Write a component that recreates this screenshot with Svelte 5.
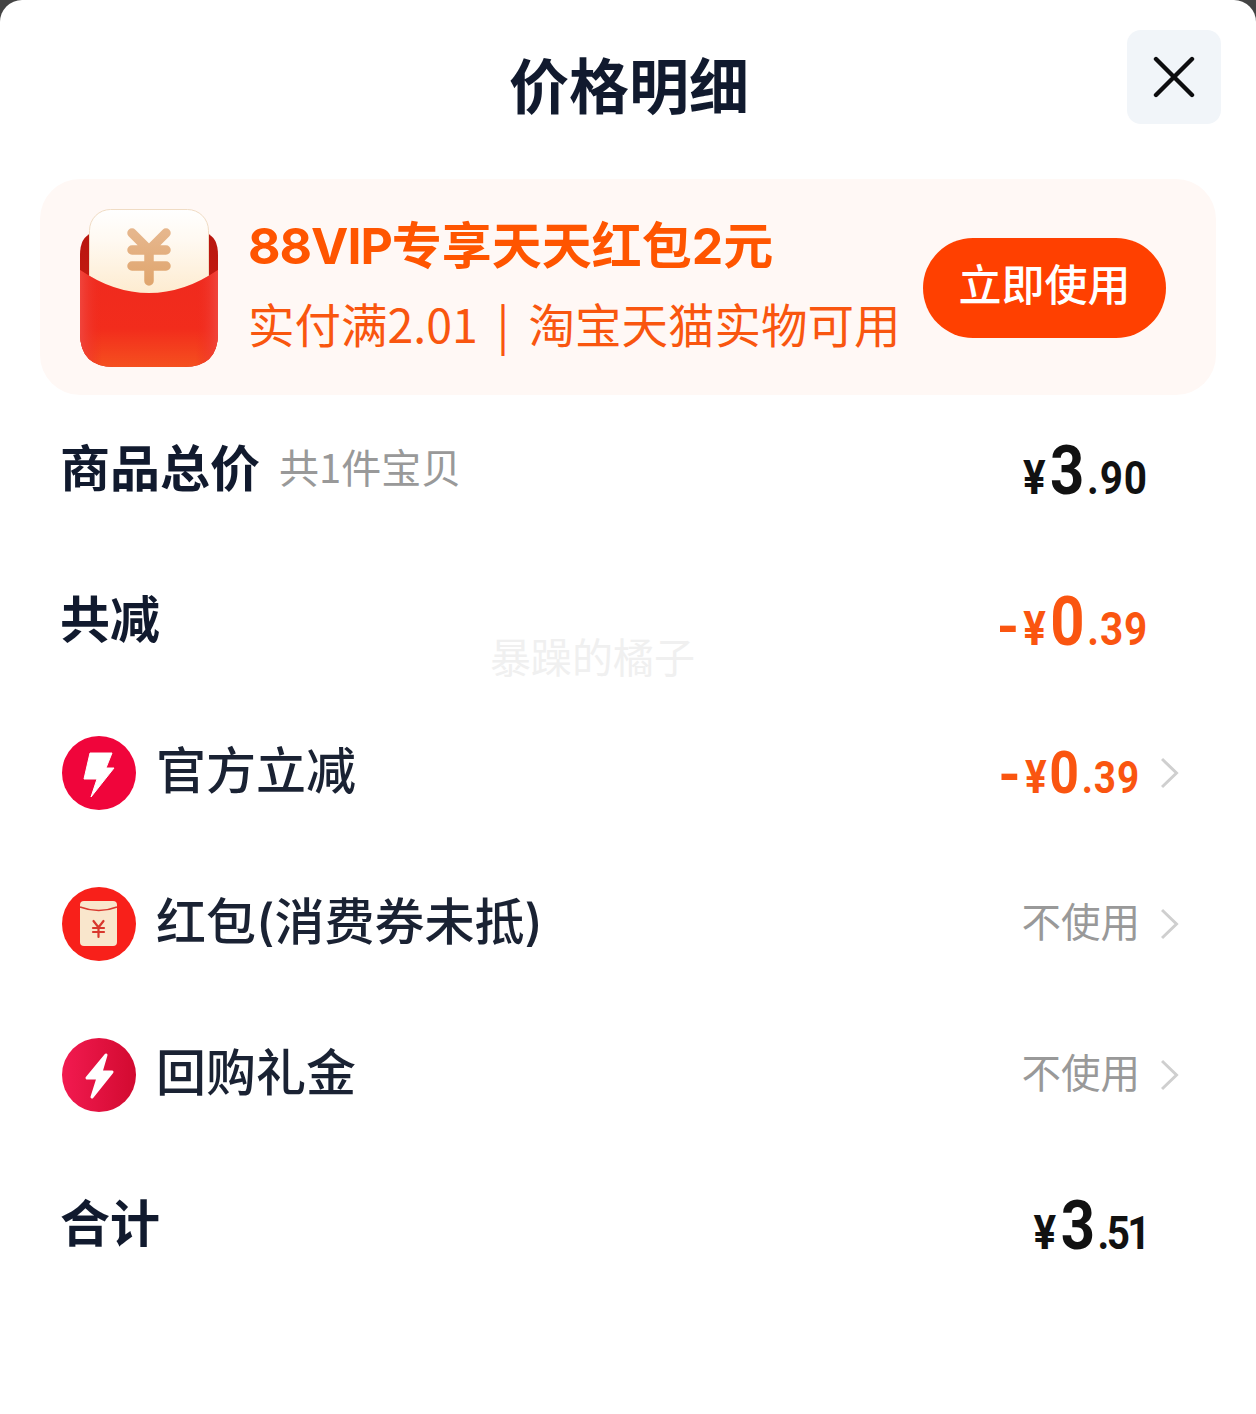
<script lang="ts">
  interface Row {
    icon: "bolt" | "packet" | "bolt2";
    label: string;
    minus?: boolean;
    int?: string;
    dec?: string;
    text?: string;
  }
  const rows: Row[] = [
    { icon: "bolt", label: "官方立减", minus: true, int: "0", dec: ".39" },
    { icon: "packet", label: "红包(消费券未抵)", text: "不使用" },
    { icon: "bolt2", label: "回购礼金", text: "不使用" },
  ];
</script>

<div class="page">
  <div class="sheet">
    <header class="head">
      <h1>价格明细</h1>
      <button type="button" class="close" aria-label="关闭">
        <svg viewBox="0 0 42 42" width="42" height="42">
          <path d="M3 3 L39 39 M39 3 L3 39" stroke="#0d0d0f" stroke-width="4.4" stroke-linecap="round" fill="none" />
        </svg>
      </button>
    </header>

    <section class="banner">
      <svg class="packet-big" viewBox="0 0 138 158" width="138" height="158">
        <defs>
          <linearGradient id="bodyG" x1="0" y1="0" x2="0" y2="1">
            <stop offset="0" stop-color="#ef2a1e" />
            <stop offset="0.6" stop-color="#f22c1c" />
            <stop offset="1" stop-color="#f5501f" />
          </linearGradient>
          <linearGradient id="edgeG" x1="0" y1="0" x2="1" y2="0">
            <stop offset="0" stop-color="#f0443c" />
            <stop offset="0.16" stop-color="#ef2a1e" stop-opacity="0" />
            <stop offset="0.84" stop-color="#ef2a1e" stop-opacity="0" />
            <stop offset="1" stop-color="#f0443c" />
          </linearGradient>
          <linearGradient id="backG" x1="0" y1="0" x2="0" y2="1">
            <stop offset="0" stop-color="#b8160e" />
            <stop offset="1" stop-color="#d42016" />
          </linearGradient>
          <linearGradient id="cardG" x1="0" y1="0" x2="0" y2="1">
            <stop offset="0" stop-color="#ffffff" />
            <stop offset="0.35" stop-color="#fff9f1" />
            <stop offset="1" stop-color="#fdeacc" />
          </linearGradient>
          <linearGradient id="yenG" x1="0" y1="0" x2="0" y2="1">
            <stop offset="0" stop-color="#e6b68c" />
            <stop offset="1" stop-color="#e0a66f" />
          </linearGradient>
        </defs>
        <path d="M0 46 Q0 28 12 24 H126 Q138 28 138 46 V124 Q138 158 104 158 H34 Q0 158 0 124 Z" fill="url(#backG)" />
        <rect x="9.5" y="0.5" width="119" height="90" rx="21" fill="url(#cardG)" stroke="#f0dcc4" stroke-width="1" />
        <path d="M0 61 Q34 84 69 84 Q104 84 138 61 V124 Q138 158 104 158 H34 Q0 158 0 124 Z" fill="url(#bodyG)" />
        <path d="M0 61 Q34 84 69 84 Q104 84 138 61 V124 Q138 158 104 158 H34 Q0 158 0 124 Z" fill="url(#edgeG)" />
        <path d="M52 24 L69 41 L86 24 M69 41 V72 M52 41 H86 M52 57 H86" stroke="url(#yenG)" stroke-width="9.5" stroke-linecap="round" stroke-linejoin="round" fill="none" />
      </svg>
      <div class="banner-text">
        <div class="banner-title"><span class="latin">88VIP</span>专享天天红包2元</div>
        <div class="banner-sub">实付满2.01<span class="sep">|</span>淘宝天猫实物可用</div>
      </div>
      <button type="button" class="use">立即使用</button>
    </section>

    <div class="row">
      <div class="left">
        <span class="strong">商品总价</span>
        <span class="count">共1件宝贝</span>
      </div>
      <div class="price big"><span class="yen">¥</span><span class="int">3</span><span class="dec">.90</span></div>
    </div>

    <div class="row">
      <div class="left"><span class="strong">共减</span></div>
      <div class="price big off"><span class="minus">-</span><span class="yen">¥</span><span class="int">0</span><span class="dec">.39</span></div>
    </div>

    {#each rows as r}
      <div class="row">
        <div class="left">
          {#if r.icon === "bolt"}
            <svg class="ico" viewBox="0 0 74 74" width="74" height="74">
              <circle cx="37" cy="37" r="37" fill="#f0053b" />
              <path d="M28 17 H50 L44 32 H52 L29 61 L35 43 H22 Z" fill="#fff" stroke="#fff" stroke-width="1" stroke-linejoin="round" />
            </svg>
          {:else if r.icon === "packet"}
            <svg class="ico" viewBox="0 0 74 74" width="74" height="74">
              <circle cx="37" cy="37" r="37" fill="#f8201a" />
              <rect x="18" y="14" width="37" height="45" rx="4" fill="#f9e6cc" />
              <path d="M18 20 Q37 27 55 20" stroke="#d8382e" stroke-width="1.6" fill="none" />
              <path d="M31.5 34 L36.5 40.5 L41.5 34 M36.5 40.5 V50 M31 41 H42 M31 45 H42" stroke="#d8382e" stroke-width="2.2" stroke-linecap="round" fill="none" />
            </svg>
          {:else}
            <svg class="ico" viewBox="0 0 74 74" width="74" height="74">
              <defs>
                <linearGradient id="boltG" x1="0" y1="0" x2="1" y2="0">
                  <stop offset="0" stop-color="#f21a50" />
                  <stop offset="1" stop-color="#d20a30" />
                </linearGradient>
              </defs>
              <circle cx="37" cy="37" r="37" fill="url(#boltG)" />
              <path d="M44 17 L25 40 H36 L30 59 L50 34 H39 Z" fill="#fff" stroke="#fff" stroke-width="3" stroke-linejoin="round" />
            </svg>
          {/if}
          <span class="label">{r.label}</span>
        </div>
        <div class="right">
          {#if r.int}
            <div class="price small off"><span class="minus">-</span><span class="yen">¥</span><span class="int">{r.int}</span><span class="dec">{r.dec}</span></div>
          {:else}
            <span class="muted">{r.text}</span>
          {/if}
          <svg class="chev" viewBox="0 0 19 32" width="19" height="32">
            <path d="M1 2 L15.5 16 L1 30" stroke="#cfcfcf" stroke-width="3" fill="none" />
          </svg>
        </div>
      </div>
    {/each}

    <div class="row">
      <div class="left"><span class="strong">合计</span></div>
      <div class="price big"><span class="yen">¥</span><span class="int">3</span><span class="dec tight">.51</span></div>
    </div>

    <div class="watermark">暴躁的橘子</div>
  </div>
</div>

<style>
  :global(body) {
    margin: 0;
    background: #444;
  }
  .page {
    width: 1256px;
    height: 1414px;
    overflow: hidden;
    font-family: "Noto Sans CJK SC", "Noto Sans", sans-serif;
  }
  .sheet {
    position: relative;
    height: 100%;
    background: #fff;
    border-radius: 22px 22px 0 0;
    box-sizing: border-box;
    padding: 0 0 0 40px;
  }
  .head {
    position: relative;
    height: 179px;
    margin-left: -40px;
    display: flex;
    justify-content: center;
  }
  h1 {
    margin: 47px 0 0 2px;
    font-size: 60px;
    line-height: 72px;
    font-weight: 700;
    color: #111a2e;
  }
  .close {
    position: absolute;
    left: 1127px;
    top: 30px;
    width: 94px;
    height: 94px;
    border: none;
    border-radius: 14px;
    background: #f1f5f9;
    padding: 0;
    display: flex;
    align-items: center;
    justify-content: center;
  }
  .banner {
    width: 1176px;
    height: 216px;
    box-sizing: border-box;
    padding: 30px 50px 0 40px;
    background: #fff8f5;
    border-radius: 40px;
    display: flex;
    align-items: flex-start;
  }
  .packet-big {
    flex: none;
  }
  .banner-text {
    margin-left: 30px;
    flex: 1;
    white-space: nowrap;
  }
  .banner-title {
    font-family: "Inter", "Noto Sans CJK SC", sans-serif;
    font-size: 50px;
    line-height: 60px;
    margin-top: 7px;
    font-weight: 700;
    color: #ff5500;
  }
  .latin {
    letter-spacing: -1px;
  }
  .banner-sub {
    font-size: 46.5px;
    line-height: 60px;
    margin-top: 17px;
    color: #f9560f;
  }
  .sep {
    margin: 0 19px;
  }
  .use {
    flex: none;
    width: 243px;
    height: 100px;
    margin-top: 29px;
    border: none;
    border-radius: 50px;
    background: #ff4000;
    color: #fff;
    font-family: inherit;
    font-size: 43px;
    font-weight: 500;
    padding: 0 0 12px;
  }
  .row {
    width: 1118px;
    height: 151px;
    margin-left: 22px;
    display: flex;
    align-items: center;
    justify-content: space-between;
  }
  .left {
    display: flex;
    align-items: center;
    white-space: nowrap;
  }
  .strong {
    margin-left: -2px;
    padding-bottom: 12px;
    font-size: 50px;
    font-weight: 700;
    color: #111a2e;
  }
  .count {
    margin-left: 19px;
    padding-bottom: 10px;
    font-size: 40px;
    color: #999;
  }
  .ico {
    flex: none;
  }
  .label {
    margin-left: 20px;
    padding-bottom: 12px;
    font-family: "Inter", "Noto Sans CJK SC", sans-serif;
    font-size: 50px;
    font-weight: 500;
    color: #1a2233;
  }
  .right {
    display: flex;
    align-items: center;
  }
  .muted {
    padding-bottom: 9px;
    font-size: 39.5px;
    color: #999;
  }
  .chev {
    margin-left: 21px;
  }
  .price {
    display: flex;
    align-items: baseline;
    font-family: "Roboto", sans-serif;
    font-weight: 700;
    color: #111;
    margin-right: 32px;
    white-space: nowrap;
    transform: scaleX(0.88);
    transform-origin: right center;
  }
  .price.small {
    margin-right: 0;
  }
  .price.off {
    color: #fa5510;
  }
  .dec {
    letter-spacing: 1px;
  }
  .dec.tight {
    letter-spacing: -3px;
  }
  .minus {
    font-family: "Inter", sans-serif;
  }
  .big .yen {
    font-size: 48px;
    margin-right: 5px;
  }
  .big .int {
    font-size: 68px;
    margin-right: 3px;
  }
  .big .dec {
    font-size: 46px;
  }
  .big .minus {
    font-size: 54px;
    margin-right: 5px;
  }
  .small .yen {
    font-size: 46px;
    margin-right: 3px;
  }
  .small .int {
    font-size: 59px;
    margin-right: 3px;
  }
  .small .dec {
    font-size: 44px;
  }
  .small .minus {
    font-size: 54px;
    margin-right: 5px;
  }
  .watermark {
    position: absolute;
    left: 490px;
    top: 629px;
    font-size: 41px;
    line-height: 52px;
    color: #f0f0f0;
    white-space: nowrap;
  }
</style>
